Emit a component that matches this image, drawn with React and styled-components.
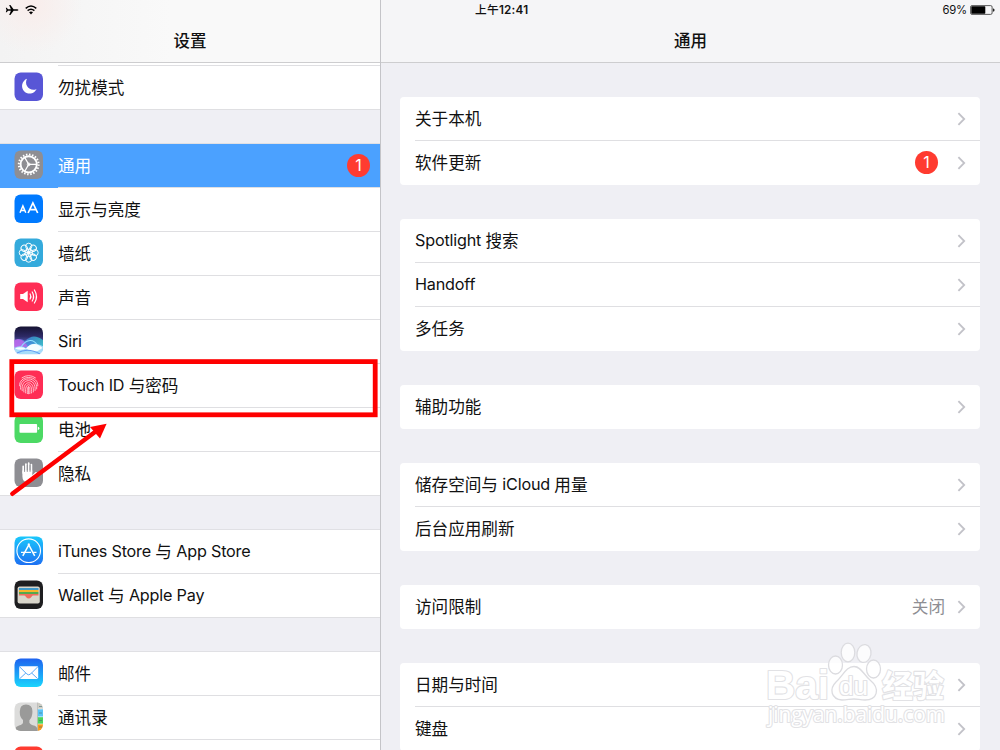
import React from "react";
import styled, { createGlobalStyle, css } from "styled-components";

const Global = createGlobalStyle`
  * { box-sizing: border-box; }
  html, body { margin: 0; padding: 0; overflow: hidden; }
  body { font-family: Inter, "Noto Sans CJK SC", sans-serif; color: #111; }
`;

const Screen = styled.div`
  position: relative;
  width: 1000px;
  height: 750px;
  overflow: hidden;
  display: flex;
  background: #efeff4;
`;

const Sidebar = styled.aside`
  width: 381px;
  flex: none;
  border-right: 1px solid #c4c4c8;
  display: flex;
  flex-direction: column;
`;

const Detail = styled.main`
  flex: 1;
  display: flex;
  flex-direction: column;
`;

const Header = styled.header`
  height: 63px;
  flex: none;
  border-bottom: 1px solid #cdcdcf;
  background: ${(p) =>
    p.$tinted
      ? "radial-gradient(circle at 32px 4px, #f9edeb 0, rgba(249,237,235,0) 50px), linear-gradient(90deg, #f3f3f3, #f9f9f9 45%)"
      : "#f5f5f7"};
  display: grid;
  grid-template-rows: 20px 43px;
`;

const StatusBar = styled.div`
  display: flex;
  align-items: center;
  font-size: 11.7px;
  line-height: 20px;
`;

const LeftStatus = styled(StatusBar)`
  padding-left: 5px;
  gap: 6px;
`;

const RightStatus = styled(StatusBar)`
  justify-content: space-between;
  padding: 0 5px 0 94px;
`;

const Clock = styled.span`
  font-weight: 600;
  letter-spacing: 0.25px;
  font-family: Inter, "Noto Sans CJK SC Medium", "Noto Sans CJK SC", sans-serif;
`;

const Power = styled.span`
  display: flex;
  align-items: center;
  gap: 3px;
  font-size: 11.3px;
  letter-spacing: -0.2px;
`;

const Title = styled.h1`
  margin: 0;
  text-align: center;
  font-size: 16.5px;
  font-weight: 500;
  line-height: 43px;
`;

const MenuScroll = styled.nav`
  flex: 1;
  min-height: 0;
  overflow: hidden;
  display: flex;
  flex-direction: column;
  gap: 34px;
  padding-top: 3px;
  background: linear-gradient(#fff 3px, transparent 3px);
`;

const MenuGroup = styled.section`
  flex: none;
  background: #fff;
  box-shadow: 0 -1px 0 ${(p) => (p.$first ? "transparent" : "#e0e0e4")};
`;

const hairline = css`
  border-bottom: 1px solid #dfdfe2;
`;

const MenuRow = styled.div`
  display: flex;
  height: 44px;
  padding-left: 14px;
  background: ${(p) => (p.$active ? "#4ba1ff" : "#fff")};
  color: ${(p) => (p.$active ? "#fff" : "#111")};
  ${(p) => p.$last && hairline}
`;

const MenuIcon = styled.span`
  width: 44px;
  flex: none;
  padding-top: 6px;
  svg { display: block; }
`;

const MenuBody = styled.div`
  flex: 1;
  display: flex;
  align-items: center;
  justify-content: space-between;
  padding-right: 10px;
  ${(p) => !p.$last && hairline}
`;

const FirstRule = styled.div`
  height: 1px;
  margin: -1px 0 0 58px;
  background: #dfdfe2;
`;

const Label = styled.span`
  font-size: 16.6px;
  line-height: 24px;
  white-space: pre;
`;

const Latin = styled.span`
  font-size: 16.2px;
  letter-spacing: -0.2px;
  position: relative;
  top: -0.6px;
`;

const Badge = styled.span`
  width: 23px;
  height: 23px;
  border-radius: 50%;
  background: #ff3b30;
  color: #fff;
  font-size: 16px;
  line-height: 23px;
  text-align: center;
`;

const Groups = styled.div`
  flex: 1;
  min-height: 0;
  overflow: hidden;
  display: flex;
  flex-direction: column;
  gap: 34px;
  padding: 34px 20px 0 19px;
`;

const Card = styled.section`
  flex: none;
  border-radius: 4px;
  background: #fff;
  overflow: hidden;
  padding-left: 15px;
`;

const CardRow = styled.div`
  height: 44px;
  display: flex;
  align-items: center;
  padding: 0 14px 1px 0;
  & + & { box-shadow: 0 -1px 0 #dfdfe2; }
`;

const Spacer = styled.span`
  flex: 1;
`;

const Value = styled(Label)`
  color: #8e8e93;
  margin-right: 12px;
`;

const RowBadge = styled(Badge)`
  margin-right: 19px;
`;

const Overlay = styled.svg`
  position: absolute;
  inset: 0;
  pointer-events: none;
`;

const Tile = ({ fill, children }) => (
  <svg width="30" height="30" viewBox="0 0 30 30">
    <rect x="0.5" y="0.5" width="28.5" height="28.5" rx="6.2" fill={fill} />
    {children}
  </svg>
);

const range = (n) => Array.from({ length: n }, (_, i) => i);

const Moon = () => (
  <Tile fill="#5856d6">
    <path d="M13 6.8A7.6 7.6 0 1 0 22.6 17C16.6 20.2 9.4 13.6 13 6.8Z" fill="#fff" />
  </Tile>
);

const Gear = () => (
  <Tile fill="#8e8e93">
    <g stroke="#fff" fill="none">
      <circle cx="14.7" cy="14.4" r="8.1" strokeWidth="1.9" />
      <circle cx="14.7" cy="14.4" r="9.9" strokeWidth="2" strokeDasharray="1.5 1.61" />
      <circle cx="14.7" cy="14.4" r="1.4" strokeWidth="0.9" />
      <path d="M14.7 14.4H22.5M14.7 14.4L10.8 7.6M14.7 14.4L10.8 21.2" strokeWidth="1.2" />
    </g>
  </Tile>
);

const Display = () => (
  <Tile fill="#007aff">
    <path d="M6 18.7L8.9 12L11.8 18.7M7 16.5H10.8" fill="none" stroke="#fff" strokeWidth="1.5" />
    <path d="M14.1 19L18.9 9L23.7 19M15.7 15.6H22.1" fill="none" stroke="#fff" strokeWidth="1.7" />
  </Tile>
);

const Flower = () => (
  <Tile fill="#34aadc">
    <g fill="none" stroke="#fff" strokeWidth="0.95">
      {range(8).map((i) => (
        <circle key={i} cx="14.7" cy="8.3" r="3.1" transform={`rotate(${i * 45} 14.7 14.7)`} />
      ))}
      {range(8).map((i) => (
        <ellipse key={i} cx="14.7" cy="12" rx="1.2" ry="2" transform={`rotate(${i * 45 + 22.5} 14.7 14.7)`} strokeWidth="0.7" />
      ))}
      <circle cx="14.7" cy="14.7" r="1.2" fill="#fff" />
    </g>
  </Tile>
);

const Speaker = () => (
  <Tile fill="#ff2d55">
    <path d="M6.2 12H9L13.7 8.7V20.2L9 17H6.2Z" fill="#fff" />
    <g fill="none" stroke="#fff" strokeWidth="1.2" strokeLinecap="round">
      <path d="M16.1 12Q17.7 14.5 16.1 17" />
      <path d="M18.2 10Q21 14.5 18.2 19" />
      <path d="M20.4 8Q24.6 14.5 20.4 21" />
    </g>
  </Tile>
);

const Siri = () => (
  <Tile fill="url(#siriSky)">
    <defs>
      <linearGradient id="siriSky" x1="0" y1="0" x2="0" y2="1">
        <stop offset="0" stopColor="#161332" />
        <stop offset="0.35" stopColor="#2d2a66" />
        <stop offset="0.6" stopColor="#5560bd" />
        <stop offset="0.8" stopColor="#8fc4f4" />
        <stop offset="1" stopColor="#f2f7ff" />
      </linearGradient>
      <linearGradient id="siriTeal" x1="0" y1="0" x2="1" y2="0">
        <stop offset="0" stopColor="#b25ce6" />
        <stop offset="0.5" stopColor="#3f9be6" />
        <stop offset="1" stopColor="#33d6cb" />
      </linearGradient>
      <clipPath id="siriClip"><rect x="0.5" y="0.5" width="28.5" height="28.5" rx="6.2" /></clipPath>
    </defs>
    <g clipPath="url(#siriClip)">
      <path d="M0 14C5 12 8 13 11 15C17 9 23 9 30 15V24H0Z" fill="url(#siriTeal)" opacity="0.75" />
      <path d="M0 15C5 11 10 14 14 21H0Z" fill="#c56af0" opacity="0.7" />
      <path d="M7 21C13 12 20 13 24 20" fill="none" stroke="#8ee2ff" strokeWidth="1.1" />
      <path d="M0 22Q6 18.5 12 22Q20 14 30 21V24L25 28H5L0 24Z" fill="#a6dcfa" />
      <path d="M1 22.4Q6 20 12 22.4Q7 25 1 22.4ZM12 22.4Q20 14 28.5 22Q20 29 12 22.4Z" fill="#f5feff" />
      <path d="M3 27Q14 21 26 28" fill="none" stroke="#5f9bf2" strokeWidth="1.2" />
    </g>
  </Tile>
);

const TouchId = () => (
  <Tile fill="#ff2d55">
    <g fill="none" stroke="#ffd3dc" strokeWidth="0.85" strokeLinecap="round">
      <path d="M8 7.8Q14.7 3.2 21.4 7.8" />
      <path d="M5.6 15.8C4.8 4.6 24.6 4.6 23.8 15.8" />
      <path d="M6.6 19.2C4.8 5 24.3 5.8 22.7 18.9" />
      <path d="M8.2 20.7C6.2 7.2 22.6 7.2 21.1 20.5" />
      <path d="M9.9 22C8.2 9.6 20.9 9.6 19.3 22" />
      <path d="M11.7 23C10.2 11.8 18.9 11.8 17.5 23" />
      <path d="M13.4 23.6C12.5 14 16.8 14 15.8 23.6" />
      <path d="M14.6 17V23.8" />
    </g>
  </Tile>
);

const BatteryTile = () => (
  <Tile fill="#4cd964">
    <rect x="5.5" y="10" width="17.6" height="8.8" rx="0.8" fill="#fff" />
    <path d="M23.8 12.8Q25.4 13.2 25.4 14.4T23.8 16Z" fill="#fff" />
  </Tile>
);

const Hand = () => (
  <Tile fill="#8e8e93">
    <g stroke="#fff" strokeLinecap="round" fill="none" strokeWidth="1.7">
      <path d="M9.2 15V8.3M11.9 14V6M14.7 14V5.2M17.4 14V6.6" />
    </g>
    <path d="M8.4 12.5H18.3V17.2L21.3 14.3Q22.6 13.7 23 14.6L18.3 22Q16.5 24.4 13.3 24.3Q8.5 23.9 8.4 18.5Z" fill="#fff" />
    <path d="M10.55 8V14M13.3 7V14M16.05 7V14" stroke="#8e8e93" strokeWidth="0.8" />
  </Tile>
);

const AppStore = () => (
  <Tile fill="url(#storeBlue)">
    <defs>
      <linearGradient id="storeBlue" x1="0" y1="0" x2="0" y2="1">
        <stop offset="0" stopColor="#1ac8fc" />
        <stop offset="1" stopColor="#1d70f2" />
      </linearGradient>
    </defs>
    <g stroke="#fff" fill="none">
      <circle cx="14.7" cy="14.7" r="11.8" strokeWidth="1.1" />
      <path d="M15.5 7.6L8.8 19.8M14.1 7.6L20.7 19.8" strokeWidth="1.5" />
      <path d="M7 16.4H17M19.2 16.4H22.5" strokeWidth="1.4" />
    </g>
  </Tile>
);

const Wallet = () => (
  <Tile fill="#1e1e20">
    <rect x="3.6" y="6.5" width="22.2" height="17" rx="2" fill="#d9d6cb" />
    <path d="M5 8H24.5V10H5Z" fill="#4098c8" />
    <path d="M5 10H24.5V12H5Z" fill="#f7b52c" />
    <path d="M5 12H24.5V14H5Z" fill="#54a94f" />
    <path d="M5 14H24.5V15.6H19.4Q18.2 15.6 17.4 17Q14.7 20 12 17Q11.2 15.6 10 15.6H5Z" fill="#f16c5d" />
  </Tile>
);

const Mail = () => (
  <Tile fill="url(#mailBlue)">
    <defs>
      <linearGradient id="mailBlue" x1="0" y1="0" x2="0" y2="1">
        <stop offset="0" stopColor="#1d62f0" />
        <stop offset="1" stopColor="#1ad5fd" />
      </linearGradient>
    </defs>
    <rect x="5.2" y="8.3" width="19" height="12.8" rx="1.3" fill="#fff" />
    <path d="M5.8 9L12.8 16Q14.7 17.7 16.6 16L23.6 9M5.8 20.6L11.8 15M23.6 20.6L17.6 15" fill="none" stroke="#58a9f8" strokeWidth="1" />
  </Tile>
);

const Contacts = () => (
  <Tile fill="#dcdcdb">
    <defs>
      <clipPath id="bookClip"><rect x="0.5" y="0.5" width="28.5" height="28.5" rx="6.2" /></clipPath>
    </defs>
    <g clipPath="url(#bookClip)">
      <path d="M23.5 0H30V7H23.5Z" fill="#cfcdc5" />
      <path d="M23.5 7H30V15H23.5Z" fill="#5ac4f7" />
      <path d="M23.5 15H30V22H23.5Z" fill="#4cd45d" />
      <path d="M23.5 22H30V30H23.5Z" fill="#fa9b1d" />
      <path d="M23.5 0V30" stroke="#b8b8b5" strokeWidth="0.7" />
      <path d="M24 7H30M24 14.8H30M24 22H30" stroke="#fff" strokeWidth="0.6" />
      <path d="M25 4.5H28M25 11H28M25 18.5H28M25 25H28" stroke="#476e71" strokeWidth="0.9" opacity="0.65" />
      <path d="M5.8 9.2Q5.9 3 12 2.6Q18.5 3 18.4 9.2Q18.7 14.8 15.4 18.2V20.7Q16 22.5 20.8 23.8Q23 24.6 23.4 27V30H1V26.6Q2 24.5 5 23.5Q8.8 22.4 9 20.5V18.1Q5.4 15 5.8 9.2Z" fill="#9a9a99" />
    </g>
  </Tile>
);

const Calendar = () => <Tile fill="#ff3b30" />;

const Chevron = () => (
  <svg width="9" height="14" viewBox="0 0 9 14">
    <path d="M1.4 1.1L7.2 7L1.4 12.9" fill="none" stroke="#c2c2c8" strokeWidth="1.8" />
  </svg>
);

const Airplane = () => (
  <svg width="14" height="12" viewBox="0 0 14 12">
    <path d="M13.4 6Q13.4 5.2 12.1 5.2H8.6L5.4 1H4.2L5.9 5.2H3L1.7 3.7H0.8L1.5 6L0.8 8.3H1.7L3 6.8H5.9L4.2 11H5.4L8.6 6.8H12.1Q13.4 6.8 13.4 6Z" fill="#000" />
  </svg>
);

const Wifi = () => (
  <svg width="12" height="10" viewBox="0 0 12 10">
    <path d="M0.7 3.4Q6 -1.2 11.3 3.4M2.6 5.6Q6 2.8 9.4 5.6" fill="none" stroke="#000" strokeWidth="1.4" />
    <path d="M4 7.2Q6 5.9 8 7.2L6 9.5Z" fill="#000" />
  </svg>
);

const BatteryStatus = () => (
  <svg width="25" height="10" viewBox="0 0 25 10">
    <rect x="0.6" y="0.6" width="21.5" height="8.8" rx="1.4" fill="none" stroke="#333" strokeWidth="0.8" />
    <rect x="1.3" y="1.3" width="14" height="7.4" rx="0.6" fill="#000" />
    <path d="M22.9 3.2Q24.6 3.6 24.6 5T22.9 6.8Z" fill="#222" />
  </svg>
);

const menu = [
  [{ icon: Moon, label: "勿扰模式" }],
  [
    { icon: Gear, label: "通用", badge: 1, active: true },
    { icon: Display, label: "显示与亮度" },
    { icon: Flower, label: "墙纸" },
    { icon: Speaker, label: "声音" },
    { icon: Siri, label: "Siri" },
    { icon: TouchId, label: "Touch ID 与密码" },
    { icon: BatteryTile, label: "电池" },
    { icon: Hand, label: "隐私" },
  ],
  [
    { icon: AppStore, label: "iTunes Store 与 App Store" },
    { icon: Wallet, label: "Wallet 与 Apple Pay" },
  ],
  [
    { icon: Mail, label: "邮件" },
    { icon: Contacts, label: "通讯录" },
    { icon: Calendar, label: "" },
  ],
];

const settings = [
  [{ label: "关于本机" }, { label: "软件更新", badge: 1 }],
  [{ label: "Spotlight 搜索" }, { label: "Handoff" }, { label: "多任务" }],
  [{ label: "辅助功能" }],
  [{ label: "储存空间与 iCloud 用量" }, { label: "后台应用刷新" }],
  [{ label: "访问限制", value: "关闭" }],
  [{ label: "日期与时间" }, { label: "键盘" }],
];

const MixedLabel = ({ text }) => (
  <Label>
    {text.split(/([\x20-\x7e]+)/).filter(Boolean).map((part, i) =>
      /^[\x20-\x7e]+$/.test(part) ? <Latin key={i}>{part}</Latin> : part
    )}
  </Label>
);

const Watermark = () => (
  <g fill="#fff" fillOpacity="0.8" stroke="#dcdce0" strokeWidth="1.3" strokeLinejoin="round">
    <ellipse cx="835.5" cy="665" rx="7" ry="9" />
    <ellipse cx="848" cy="652.5" rx="6.8" ry="9.3" />
    <ellipse cx="864" cy="653.5" rx="7" ry="9" transform="rotate(10 864 653.5)" />
    <ellipse cx="873.5" cy="669" rx="7" ry="9" />
    <path d="M854 666.5C861 666.5 864 675 870 680C881 689 877 700 865 700C860 700 858 699 854 699C850 699 847 700 842 700C831 699 829 689 836 682C843 676 846 666.5 854 666.5Z" />
    <g fontFamily="Liberation Sans, sans-serif" fontWeight="700" fillOpacity="1" stroke="#e2e2e5" paintOrder="stroke" strokeWidth="2.2">
      <text x="766" y="698.5" fontSize="41" textLength="63" lengthAdjust="spacingAndGlyphs">Bai</text>
      <text x="839" y="695" fontSize="25" fontWeight="400" textLength="29" lengthAdjust="spacingAndGlyphs">du</text>
      <text x="882" y="697" fontSize="31" fontFamily="Noto Sans CJK SC, sans-serif">经验</text>
      <text x="768" y="722" fontSize="21" fontWeight="400" fontFamily="Open Sans, sans-serif" textLength="177" lengthAdjust="spacingAndGlyphs">jingyan.baidu.com</text>
    </g>
  </g>
);

export default function App() {
  return (
    <Screen>
      <Global />
      <Sidebar>
        <Header $tinted>
          <LeftStatus><Airplane /><Wifi /></LeftStatus>
          <Title>设置</Title>
        </Header>
        <MenuScroll>
          {menu.map((group, g) => (
            <MenuGroup key={g} $first={g === 0}>
              {g === 0 && <FirstRule />}
              {group.map(({ icon: Icon, label, badge, active }, i) => {
                const last = i === group.length - 1;
                return (
                  <MenuRow key={i} $active={active} $last={last}>
                    <MenuIcon><Icon /></MenuIcon>
                    <MenuBody $last={last}>
                      <MixedLabel text={label} />
                      {badge && <Badge>{badge}</Badge>}
                    </MenuBody>
                  </MenuRow>
                );
              })}
            </MenuGroup>
          ))}
        </MenuScroll>
      </Sidebar>
      <Detail>
        <Header>
          <RightStatus>
            <Clock>上午12:41</Clock>
            <Power>69%<BatteryStatus /></Power>
          </RightStatus>
          <Title>通用</Title>
        </Header>
        <Groups>
          {settings.map((group, g) => (
            <Card key={g}>
              {group.map(({ label, value, badge }) => (
                <CardRow key={label}>
                  <MixedLabel text={label} />
                  <Spacer />
                  {value && <Value>{value}</Value>}
                  {badge && <RowBadge>{badge}</RowBadge>}
                  <Chevron />
                </CardRow>
              ))}
            </Card>
          ))}
        </Groups>
      </Detail>
      <Overlay width="1000" height="750" viewBox="0 0 1000 750">
        <Watermark />
        <rect x="11.8" y="361.6" width="363.4" height="53.2" fill="none" stroke="#fe0000" strokeWidth="4.8" />
        <path d="M12.3 493.8L95 432" stroke="#fe0000" strokeWidth="4.4" strokeLinecap="round" />
        <path d="M106.6 423.7L90 427L100 438.6Z" fill="#fe0000" />
      </Overlay>
    </Screen>
  );
}
